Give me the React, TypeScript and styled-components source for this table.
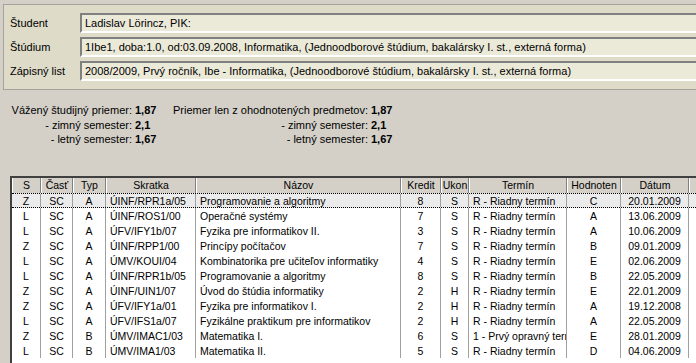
import React from 'react';
import styled, { createGlobalStyle } from 'styled-components';

const GlobalStyle = createGlobalStyle`
  html, body { margin: 0; padding: 0; background: #d4d0c8; overflow: hidden; }
  body { font-family: "Liberation Sans", Arial, sans-serif; font-size: 11px; color: #000; }
`;

const Page = styled.div`
  width: 696px;
  height: 363px;
  overflow: hidden;
  padding-top: 4px;
  box-sizing: border-box;
`;

const InfoPanel = styled.div`
  margin-left: 3px;
  width: 760px;
  box-sizing: border-box;
  border: 1px solid #a4a39b;
  background: #dedcc9;
  padding: 8px 0 8px 0;
  display: grid;
  grid-template-columns: 76px 1fr;
  row-gap: 4px;
`;

const Label = styled.div`
  align-self: center;
  padding-left: 6px;
  white-space: nowrap;
`;

const Field = styled.div`
  height: 20px;
  box-sizing: border-box;
  border-top: 2px solid #808080;
  border-left: 2px solid #808080;
  border-bottom: 2px solid #ffffff;
  border-right: 2px solid #ffffff;
  background: #ebe9d8;
  padding-left: 3px;
  line-height: 16px;
  white-space: nowrap;
  overflow: hidden;
`;

const StatsGrid = styled.div`
  margin: 13px 0 0 12px;
  height: 44px;
  display: grid;
  grid-template-columns: 123px 30px 206px auto;
  grid-auto-rows: 14.5px;
  line-height: 14.5px;
  white-space: nowrap;
`;

const StatLabel = styled.div`
  display: flex;
  justify-content: flex-end;
  padding-right: 3px;
`;

const StatValue = styled.div`
  font-weight: bold;
`;

const TableFrame = styled.div`
  margin: 29px 0 0 10px;
  width: 760px;
  height: 200px;
  border-top: 2px solid #404040;
  border-left: 2px solid #404040;
  background: #ffffff;
  font-size: 10.5px;
`;

const HeaderRow = styled.div`
  display: flex;
  height: 15px;
  background: #d4d0c8;
`;

const HeadCell = styled.div<{ $w: number }>`
  flex: none;
  width: ${(p) => p.$w}px;
  box-sizing: border-box;
  border-left: 1px solid #ffffff;
  border-right: 1px solid #808080;
  text-align: center;
  line-height: 15px;
  white-space: nowrap;
  overflow: hidden;
`;

const Row = styled.div<{ $selected?: boolean }>`
  display: flex;
  height: 15px;
  box-sizing: border-box;
  background: ${(p) => (p.$selected ? '#ebebeb' : 'transparent')};
  border-top: ${(p) => (p.$selected ? '1px dotted #000' : 'none')};
  border-bottom: ${(p) => (p.$selected ? '1px dotted #000' : 'none')};
`;

const Cell = styled.div<{ $w: number; $align: 'left' | 'center' }>`
  flex: none;
  width: ${(p) => p.$w}px;
  box-sizing: border-box;
  border-right: 1px solid #a0a0a0;
  display: flex;
  align-items: center;
  justify-content: ${(p) => (p.$align === 'left' ? 'flex-start' : 'center')};
  padding-left: ${(p) => (p.$align === 'left' ? '4px' : '0')};
  white-space: nowrap;
  overflow: hidden;
`;

type Col = { title: string; w: number; align: 'left' | 'center' };

const columns: Col[] = [
  { title: 'S', w: 29, align: 'center' },
  { title: 'Časť', w: 32, align: 'center' },
  { title: 'Typ', w: 33, align: 'center' },
  { title: 'Skratka', w: 90, align: 'left' },
  { title: 'Názov', w: 205, align: 'left' },
  { title: 'Kredit', w: 40, align: 'center' },
  { title: 'Ukon', w: 28, align: 'center' },
  { title: 'Termín', w: 98, align: 'left' },
  { title: 'Hodnoten', w: 54, align: 'center' },
  { title: 'Dátum', w: 68, align: 'center' },
  { title: '', w: 80, align: 'left' },
];

const rows: string[][] = [
  ['Z', 'SC', 'A', 'ÚINF/RPR1a/05', 'Programovanie a algoritmy', '8', 'S', 'R - Riadny termín', 'C', '20.01.2009', ''],
  ['L', 'SC', 'A', 'ÚINF/ROS1/00', 'Operačné systémy', '7', 'S', 'R - Riadny termín', 'A', '13.06.2009', ''],
  ['L', 'SC', 'A', 'ÚFV/IFY1b/07', 'Fyzika pre informatikov II.', '3', 'S', 'R - Riadny termín', 'A', '10.06.2009', ''],
  ['Z', 'SC', 'A', 'ÚINF/RPP1/00', 'Princípy počítačov', '7', 'S', 'R - Riadny termín', 'B', '09.01.2009', ''],
  ['L', 'SC', 'A', 'ÚMV/KOUI/04', 'Kombinatorika pre učiteľov informatiky', '4', 'S', 'R - Riadny termín', 'E', '02.06.2009', ''],
  ['L', 'SC', 'A', 'ÚINF/RPR1b/05', 'Programovanie a algoritmy', '8', 'S', 'R - Riadny termín', 'B', '22.05.2009', ''],
  ['Z', 'SC', 'A', 'ÚINF/UIN1/07', 'Úvod do štúdia informatiky', '2', 'H', 'R - Riadny termín', 'E', '22.01.2009', ''],
  ['Z', 'SC', 'A', 'ÚFV/IFY1a/01', 'Fyzika pre informatikov I.', '2', 'H', 'R - Riadny termín', 'A', '19.12.2008', ''],
  ['L', 'SC', 'A', 'ÚFV/IFS1a/07', 'Fyzikálne praktikum pre informatikov', '2', 'H', 'R - Riadny termín', 'A', '22.05.2009', ''],
  ['Z', 'SC', 'B', 'ÚMV/IMAC1/03', 'Matematika I.', '6', 'S', '1 - Prvý opravný termín', 'E', '28.01.2009', ''],
  ['L', 'SC', 'B', 'ÚMV/IMA1/03', 'Matematika II.', '5', 'S', 'R - Riadny termín', 'D', '04.06.2009', ''],
];

export default function App() {
  return (
    <>
      <GlobalStyle />
      <Page>
        <InfoPanel>
          <Label>Študent</Label>
          <Field>Ladislav Lörincz, PIK:</Field>
          <Label>Štúdium</Label>
          <Field>
            1Ibe1, doba:1.0, od:03.09.2008, Informatika, (Jednoodborové štúdium, bakalársky I. st., externá forma)
          </Field>
          <Label>Zápisný list</Label>
          <Field>
            2008/2009, Prvý ročník, Ibe - Informatika, (Jednoodborové štúdium, bakalársky I. st., externá forma)
          </Field>
        </InfoPanel>

        <StatsGrid>
          <StatLabel>Vážený študijný priemer:</StatLabel>
          <StatValue>1,87</StatValue>
          <StatLabel>Priemer len z ohodnotených predmetov:</StatLabel>
          <StatValue>1,87</StatValue>
          <StatLabel>- zimný semester:</StatLabel>
          <StatValue>2,1</StatValue>
          <StatLabel>- zimný semester:</StatLabel>
          <StatValue>2,1</StatValue>
          <StatLabel>- letný semester:</StatLabel>
          <StatValue>1,67</StatValue>
          <StatLabel>- letný semester:</StatLabel>
          <StatValue>1,67</StatValue>
        </StatsGrid>

        <TableFrame>
          <HeaderRow>
            {columns.map((c, i) => (
              <HeadCell key={i} $w={c.w}>
                {c.title}
              </HeadCell>
            ))}
          </HeaderRow>
          {rows.map((r, i) => (
            <Row key={i} $selected={i === 0}>
              {r.map((v, j) => (
                <Cell key={j} $w={columns[j].w} $align={columns[j].align}>
                  {v}
                </Cell>
              ))}
            </Row>
          ))}
        </TableFrame>
      </Page>
    </>
  );
}
